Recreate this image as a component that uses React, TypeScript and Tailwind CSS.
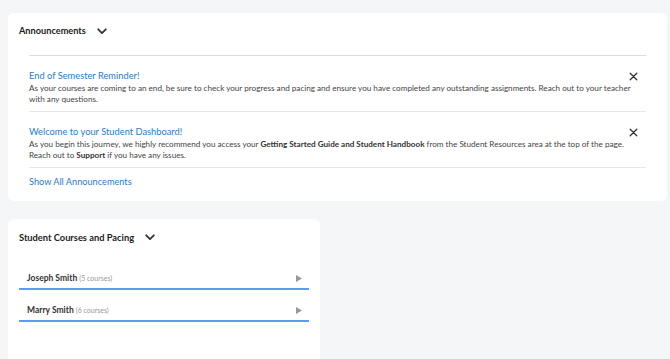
import React from 'react'

const announcements = [
  {
    title: 'End of Semester Reminder!',
    body: (
      <>
        As your courses are coming to an end, be sure to check your progress and pacing and ensure you have completed any
        outstanding assignments. Reach out to your teacher with any questions.
      </>
    ),
  },
  {
    title: 'Welcome to your Student Dashboard!',
    body: (
      <>
        As you begin this journey, we highly recommend you access your <b className="font-bold text-[#333]">Getting Started Guide and Student Handbook</b> from the
        Student Resources area at the top of the page. Reach out to <b className="font-bold text-[#333]">Support</b> if you have any issues.
      </>
    ),
  },
]

const students = [
  { name: 'Joseph Smith', count: 5 },
  { name: 'Marry Smith', count: 6 },
]

const Chevron = () => (
  <svg width="10" height="7" viewBox="0 0 10 7" fill="none" stroke="#333" strokeWidth="1.8" strokeLinecap="round" strokeLinejoin="round">
    <path d="M1.2 1.3 5 5.1 8.8 1.3" />
  </svg>
)

const Close = () => (
  <svg width="9" height="9" viewBox="0 0 9 9" stroke="#333" strokeWidth="1.3" strokeLinecap="round">
    <path d="M1.2 1.2l6.6 6.6M7.8 1.2l-6.6 6.6" />
  </svg>
)

export default function App() {
  return (
    <div className="h-[359px] overflow-hidden bg-[#f5f6f7] pl-2 pt-[13px] font-['Lato','Liberation_Sans',sans-serif] text-[#333]">
      <div className="w-[659px] h-[188px] rounded-md bg-white px-[21px]">
        <div className="-ml-[10px] flex items-center gap-[11px] h-[42px] pb-[6px]">
          <span className="text-[9.2px] font-bold text-[#222]">Announcements</span>
          <Chevron />
        </div>
        <div className="border-t border-[#dcdcdc]">
          {announcements.map((a) => (
            <div key={a.title} className="relative border-b border-[#e6e6e6] pt-[12px] pb-[6px]">
              <div className="text-[9.3px] leading-[15px] text-[#1f7ccf]">{a.title}</div>
              <div className="pr-[12px] text-[8.15px] leading-[11px] text-[#444]">{a.body}</div>
              <div className="absolute right-[8px] top-[16px]">
                <Close />
              </div>
            </div>
          ))}
          <div className="pt-[8px] text-[9.2px] leading-[12px] text-[#1f7ccf]">Show All Announcements</div>
        </div>
      </div>

      <div className="mt-[18px] w-[312px] h-[140px] rounded-t-md bg-white px-[11px]">
        <div className="flex items-center gap-[11px] h-[37px]">
          <span className="text-[9.3px] font-bold text-[#222]">Student Courses and Pacing</span>
          <Chevron />
        </div>
        <div className="mt-[12px] flex flex-col gap-[10px]">
          {students.map((s) => (
            <div key={s.name} className="flex items-center justify-between h-[22px] pl-[8px] pr-[7px] border-b-2 border-[#5a9ef0]">
              <div className="text-[8.5px] font-bold text-[#333]">
                {s.name} <span className="text-[7px] font-normal text-[#999]">({s.count} courses)</span>
              </div>
              <svg width="6" height="7" viewBox="0 0 6 7">
                <path d="M0 0L6 3.5 0 7z" fill="#999" />
              </svg>
            </div>
          ))}
        </div>
      </div>
    </div>
  )
}
